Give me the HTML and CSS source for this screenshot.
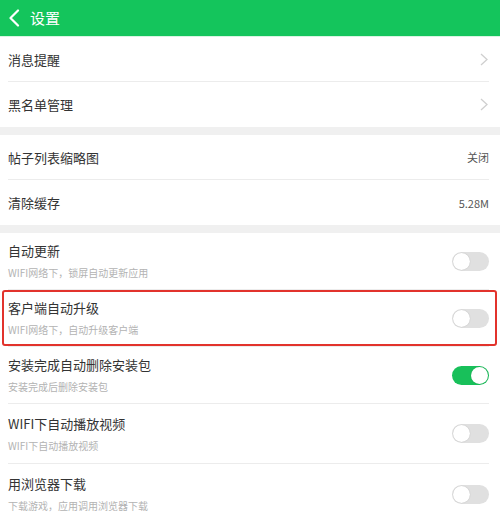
FILE: index.html
```html
<!DOCTYPE html>
<html lang="zh-CN">
<head>
<meta charset="utf-8">
<title>设置</title>
<link rel="stylesheet" href="styles.css">
</head>
<body>
<header class="topbar">
  <svg class="back" width="12" height="18" viewBox="0 0 12 18"><polyline points="10,1.5 2.5,9 10,16.5" fill="none" stroke="#fff" stroke-width="2.2" stroke-linecap="round" stroke-linejoin="round"/></svg>
  <span class="title">设置</span>
</header>

<section class="group">
  <div class="row"><span class="label">消息提醒</span><svg class="chev" width="8" height="13" viewBox="0 0 8 13"><polyline points="1,1 7,6.5 1,12" fill="none" stroke="#cfcfcf" stroke-width="1.3"/></svg></div>
  <div class="row"><span class="label">黑名单管理</span><svg class="chev" width="8" height="13" viewBox="0 0 8 13"><polyline points="1,1 7,6.5 1,12" fill="none" stroke="#cfcfcf" stroke-width="1.3"/></svg></div>
</section>

<section class="group">
  <div class="row"><span class="label">帖子列表缩略图</span><span class="value">关闭</span></div>
  <div class="row"><span class="label">清除缓存</span><span class="value">5.28M</span></div>
</section>

<section class="group">
  <div class="row row-sub">
    <div class="text"><span class="label">自动更新</span><span class="sub">WIFI网络下，锁屏自动更新应用</span></div>
    <span class="switch"></span>
  </div>
  <div class="row row-sub highlight">
    <div class="text"><span class="label">客户端自动升级</span><span class="sub">WIFI网络下，自动升级客户端</span></div>
    <span class="switch"></span>
  </div>
  <div class="row row-sub">
    <div class="text"><span class="label">安装完成自动删除安装包</span><span class="sub">安装完成后删除安装包</span></div>
    <span class="switch on"></span>
  </div>
  <div class="row row-sub row-tall">
    <div class="text"><span class="label">WIFI下自动播放视频</span><span class="sub">WIFI下自动播放视频</span></div>
    <span class="switch"></span>
  </div>
  <div class="row row-sub row-tall">
    <div class="text"><span class="label">用浏览器下载</span><span class="sub">下载游戏，应用调用浏览器下载</span></div>
    <span class="switch"></span>
  </div>
</section>
</body>
</html>
```

FILE: styles.css
```css
html, body {
  margin: 0;
  padding: 0;
}
body {
  width: 500px;
  height: 521px;
  overflow: hidden;
  background: #f0f0f0;
  font-family: "Noto Sans CJK SC", "Noto Sans", sans-serif;
  color: #333;
}
.topbar {
  height: 37px;
  background: #14c55c;
  display: flex;
  align-items: center;
  padding-left: 8px;
  gap: 10px;
  border-bottom: 1px solid #d8f5e2;
  box-sizing: border-box;
}
.back {
  display: block;
}
.title {
  color: #fff;
  font-size: 15px;
  line-height: 1;
  margin-top: -1px;
}
.group {
  background: #fff;
  margin-bottom: 8px;
}
.row {
  position: relative;
  height: 45px;
  box-sizing: border-box;
  margin: 0 11px 0 8px;
  border-bottom: 1px solid #ececec;
  display: flex;
  align-items: center;
  justify-content: space-between;
}
.group > .row:last-child {
  border-bottom: none;
}
.label {
  font-size: 13px;
  line-height: 1;
  color: #333;
}
.value {
  font-size: 11px;
  color: #555;
}
.chev {
  display: block;
  margin-right: 1px;
}
.row-sub {
  height: 57px;
}
.row-tall {
  height: 60px;
}
.text {
  display: flex;
  flex-direction: column;
  gap: 11px;
}
.sub {
  font-size: 10px;
  line-height: 1;
  color: #b3b3b3;
}
.switch {
  position: relative;
  width: 37px;
  height: 19px;
  border-radius: 10px;
  background: #e0e0e0;
  box-sizing: border-box;
}
.switch::after {
  content: "";
  position: absolute;
  top: 1px;
  left: 1px;
  width: 17px;
  height: 17px;
  border-radius: 50%;
  background: #fff;
  box-shadow: 0 0 1px rgba(0,0,0,0.25);
}
.switch.on {
  background: #18c05a;
}
.switch.on::after {
  left: auto;
  right: 1px;
}
.highlight::before {
  content: "";
  position: absolute;
  top: 0;
  bottom: 0;
  left: -6px;
  right: -8px;
  border: 2px solid #e2332c;
  border-radius: 3px;
  pointer-events: none;
}
```
